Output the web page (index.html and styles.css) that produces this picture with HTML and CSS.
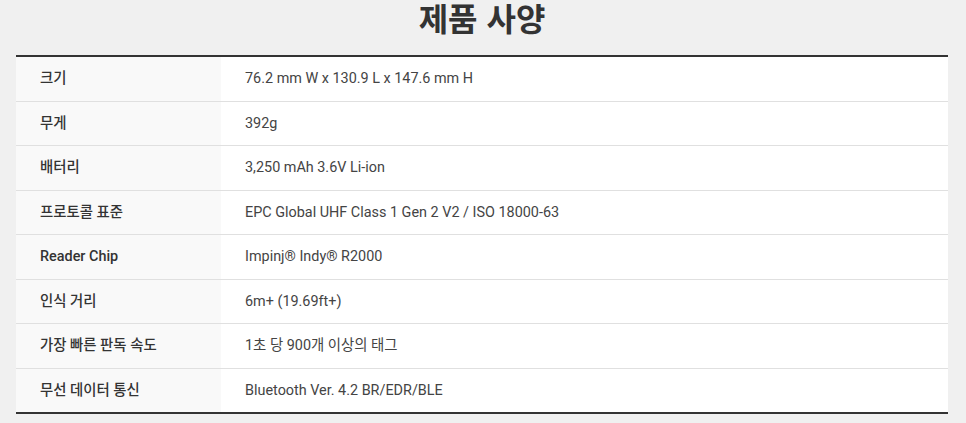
FILE: index.html
```html
<!DOCTYPE html>
<html lang="ko">
<head>
<meta charset="utf-8">
<title>제품 사양</title>
<link rel="stylesheet" href="styles.css">
</head>
<body>
<section class="spec">
  <h2 class="spec-title">제품 사양</h2>
  <table class="spec-table">
    <tbody>
      <tr><th>크기</th><td>76.2 mm W x 130.9 L x 147.6 mm H</td></tr>
      <tr><th>무게</th><td>392g</td></tr>
      <tr><th>배터리</th><td>3,250 mAh 3.6V Li-ion</td></tr>
      <tr><th>프로토콜 표준</th><td>EPC Global UHF Class 1 Gen 2 V2 / ISO 18000-63</td></tr>
      <tr><th>Reader Chip</th><td>Impinj® Indy® R2000</td></tr>
      <tr><th>인식 거리</th><td>6m+ (19.69ft+)</td></tr>
      <tr><th>가장 빠른 판독 속도</th><td>1초 당 900개 이상의 태그</td></tr>
      <tr><th>무선 데이터 통신</th><td>Bluetooth Ver. 4.2 BR/EDR/BLE</td></tr>
    </tbody>
  </table>
</section>
</body>
</html>
```

FILE: styles.css
```css
html, body {
  margin: 0;
  padding: 0;
  background: #f0f0f0;
}
body {
  font-family: Roboto, "Noto Sans CJK KR", sans-serif;
  color: #333;
}
.spec {
  padding: 0 18px 0 16px;
}
.spec-title {
  margin: 0;
  height: 55px;
  padding-top: 1px;
  box-sizing: border-box;
  font-size: 32px;
  line-height: 32px;
  font-weight: 700;
  text-align: center;
  color: #333;
  font-family: "Noto Sans CJK KR", sans-serif;
}
.spec-table {
  width: 100%;
  border-collapse: collapse;
  border-top: 2px solid #333;
  border-bottom: 2px solid #333;
  font-size: 14.4px;
}
.spec-table tr + tr th,
.spec-table tr + tr td {
  border-top: 1px solid #e0e0e0;
}
.spec-table th,
.spec-table td {
  padding: 12px 24px;
  line-height: 19.5px;
  text-align: left;
  vertical-align: middle;
}
.spec-table th {
  width: 22%;
  box-sizing: border-box;
  background: #f9f9f9;
  font-weight: 500;
  color: #333;
}
.spec-table td {
  background: #fff;
  color: #444;
}
```
